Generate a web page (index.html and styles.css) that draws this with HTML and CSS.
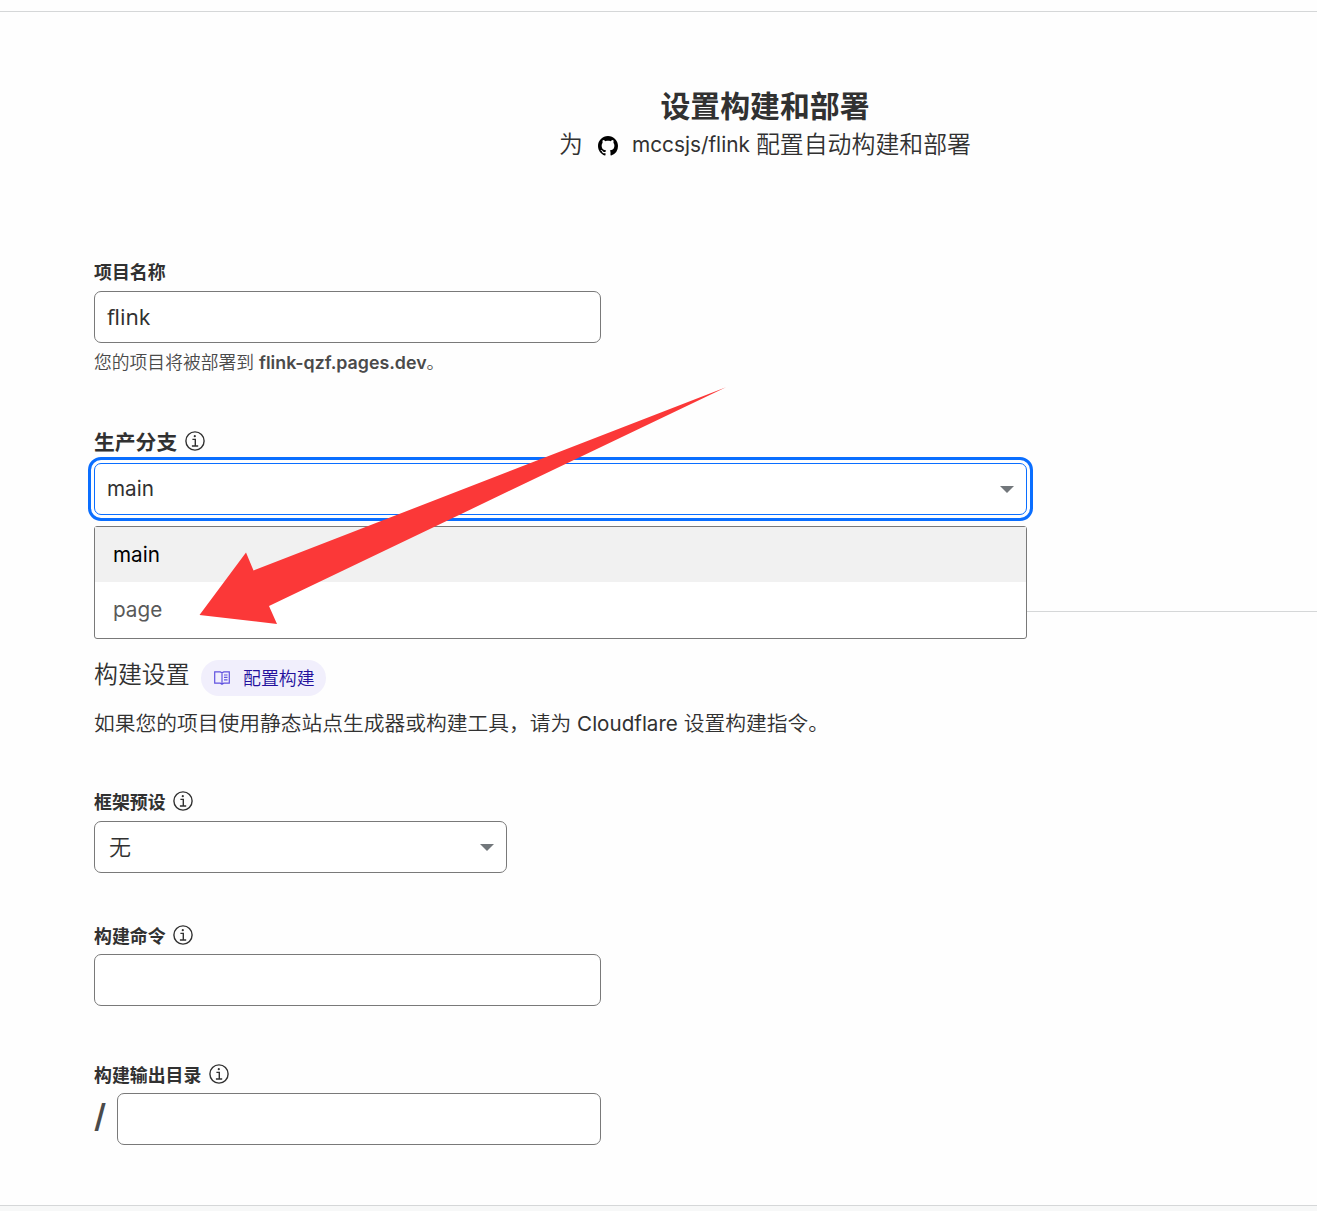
FILE: index.html
```html
<!DOCTYPE html>
<html lang="zh-CN">
<head>
<meta charset="utf-8">
<title>设置构建和部署</title>
<link rel="stylesheet" href="styles.css">
</head>
<body>
<svg class="sprite" aria-hidden="true">
  <symbol id="info" viewBox="0 0 20 20">
    <circle cx="10" cy="10" r="9.1" fill="none" stroke="currentColor" stroke-width="1.4"/>
    <circle cx="9.8" cy="5.2" r="1.1" fill="currentColor"/>
    <path d="M7.400 8.400h2.900v6.500M6.900 15h6.300" fill="none" stroke="currentColor" stroke-width="1.4"/>
  </symbol>
</svg>
<div class="topbar"></div>
<main class="page">
  <header class="heading">
    <h1>设置构建和部署</h1>
    <p class="subtitle"><span class="cjk">为</span>
      <svg class="github" viewBox="0 0 16 16"><path d="M8 0C3.58 0 0 3.58 0 8c0 3.54 2.29 6.53 5.47 7.59.4.07.55-.17.55-.38 0-.19-.01-.82-.01-1.49-2.01.37-2.53-.49-2.69-.94-.09-.23-.48-.94-.82-1.13-.28-.15-.68-.52-.01-.53.63-.01 1.08.58 1.23.82.72 1.21 1.87.87 2.33.66.07-.52.28-.87.51-1.07-1.78-.2-3.64-.89-3.64-3.95 0-.87.31-1.59.82-2.15-.08-.2-.36-1.02.08-2.12 0 0 .67-.21 2.2.82.64-.18 1.32-.27 2-.27s1.36.09 2 .27c1.53-1.04 2.2-.82 2.2-.82.44 1.1.16 1.92.08 2.12.51.56.82 1.27.82 2.15 0 3.07-1.87 3.75-3.65 3.95.29.25.54.73.54 1.48 0 1.07-.01 1.93-.01 2.2 0 .21.15.46.55.38A8.01 8.01 0 0 0 16 8c0-4.42-3.58-8-8-8z"/></svg>
      <span class="repo">mccsjs/flink</span><span class="cjk">配置自动构建和部署</span></p>
  </header>

  <section class="field project">
    <label class="label">项目名称</label>
    <div class="control project-name">flink</div>
    <p class="hint">您的项目将被部署到 <b>flink-qzf.pages.dev</b>。</p>
  </section>

  <section class="field branch">
    <label class="label large">生产分支<svg class="info"><use href="#info"/></svg></label>
    <div class="control select focused"><span>main</span><i class="caret"></i></div>
    <div class="menu">
      <div class="option active">main</div>
      <div class="option">page</div>
    </div>
  </section>

  <section class="build">
    <div class="build-title"><h2>构建设置</h2>
      <a class="pill"><svg class="book" viewBox="0 0 16 14" fill="none" stroke="currentColor" stroke-width="1.2"><path d="M8 1.6V13M.7.9h5.6L8 1.8 9.7.9h5.600v11.300H9.700L8 13.200l-1.700-1H.7z"/><path d="M10 4h3.500M10 6.400h3.500M10 8.800h3.500"/></svg><span>配置构建</span></a>
    </div>
    <p class="description">如果您的项目使用静态站点生成器或构建工具，请为 <span class="brand">Cloudflare</span> 设置构建指令。</p>
  </section>

  <section class="field preset">
    <label class="label">框架预设<svg class="info"><use href="#info"/></svg></label>
    <div class="control select"><span>无</span><i class="caret"></i></div>
  </section>

  <section class="field command">
    <label class="label">构建命令<svg class="info"><use href="#info"/></svg></label>
    <div class="control"></div>
  </section>

  <section class="field output">
    <label class="label">构建输出目录<svg class="info"><use href="#info"/></svg></label>
    <div class="path"><span class="slash">/</span><div class="control"></div></div>
  </section>
</main>
<footer class="footer"></footer>
<svg class="arrow" viewBox="0 0 528 240"><path d="M.5 228 47 165.500l7.500 18L527 .2 70 219l8 18z"/></svg>
</body>
</html>
```
FILE: styles.css
```css
* { box-sizing: border-box; }
body {
  position: relative;
  margin: 0;
  height: 1211px;
  overflow: hidden;
  display: flex;
  flex-direction: column;
  background: #fefefe;
  color: #313131;
  font-family: Inter, "Noto Sans CJK SC", sans-serif;
  font-size: 20.700px;
}
h1, h2, p { margin: 0; }
.sprite { display: none; }
.topbar { flex: none; height: 12px; border-bottom: 1px solid #d5d7d8; }
.page { height: 1193px; flex: none; }
.heading {
  height: 246px;
  padding: 75px 0 0 213px;
  display: flex;
  flex-direction: column;
  align-items: center;
}
h1 { font-size: 29.900px; line-height: 38px; font-weight: 700; }
.subtitle {
  display: flex;
  align-items: center;
  height: 38px;
  font-size: 23.900px;
  font-weight: 350;
  white-space: nowrap;
}
.cjk { padding-bottom: 4px; }
.github { width: 20px; height: 20px; margin: 4px 14px 0 15px; fill: #000; }
.repo { width: 124px; font-size: 20.800px; font-weight: 400; }
.field { padding-left: 94px; }
.label {
  display: flex;
  align-items: center;
  height: 26px;
  font-size: 17.900px;
  font-weight: 700;
}
.label.large { height: 25px; font-size: 20.800px; }
.info { width: 20px; height: 20px; margin-left: 7.400px; }
.control {
  width: 507px;
  height: 52px;
  padding: 0 12px;
  display: flex;
  align-items: center;
  border: 1px solid #797979;
  border-radius: 7px;
  background: #fff;
}
.project { height: 168px; }
.project .control { margin-top: 7px; }
.project-name { padding-bottom: 2px; font-family: "Noto Sans", sans-serif; font-size: 21.500px; }
.hint { margin-top: 6px; font-size: 17.800px; line-height: 28px; font-weight: 350; color: #4a4a4a; }
.hint b { font-weight: 600; }
.branch { height: 186px; position: relative; padding-top: 2px; }
.branch::after {
  content: "";
  display: block;
  height: 1px;
  margin-top: 96px;
  background: #d5d7d8;
}
.select { justify-content: space-between; }
.branch .control { width: 933px; margin-top: 10px; padding-bottom: 1px; }
.focused { border-color: #0a6eff; outline: 3px solid #0a6eff; outline-offset: 3px; }
.branch .info { margin-left: 8px; }
.branch .caret { margin-top: 2px; }
.caret {
  border: 7px solid transparent;
  border-top-color: #72777b;
  border-bottom: 0;
}
.menu {
  position: absolute;
  left: 94px;
  top: 100px;
  width: 933px;
  height: 113px;
  border: 1px solid #797979;
  border-radius: 3px;
  background: #fff;
}
.option { height: 55px; padding-left: 18px; line-height: 55px; color: #595959; }
.option.active { background: #f1f1f1; color: #000; }
.build { height: 176px; padding: 46px 0 0 94px; }
.build-title { display: flex; height: 38px; }
h2 { width: 107px; font-size: 23.900px; line-height: 33px; font-weight: 350; }
.pill {
  display: flex;
  align-items: center;
  width: 125px;
  height: 36px;
  margin-top: 2px;
  padding-left: 13px;
  border-radius: 18px;
  background: #f1effc;
  color: #24109c;
  font-size: 17.900px;
  font-weight: 350;
}
.pill span { padding-bottom: 2px; }
.book { width: 16px; height: 14px; margin-right: 13px; color: #6052df; }
.description { margin-top: 13px; font-size: 20.750px; line-height: 30px; font-weight: 350; white-space: nowrap; }
.brand { font-size: 20.600px; font-weight: 400; }
.preset { height: 134px; }
.preset .control { width: 413px; margin-top: 7px; padding-left: 14px; padding-bottom: 5px; font-size: 22px; font-weight: 350; }
.preset .caret { margin-top: 5px; }
.command { height: 139px; }
.command .control { margin-top: 6px; }
.path { display: flex; margin-top: 6px; }
.path .control { width: 484px; }
.slash { width: 23px; font-size: 32px; line-height: 46px; font-weight: 600; color: #4a4a4a; }
.footer { flex: 1; border-top: 1px solid #d5d7d8; background: #f7f8f8; }
.arrow { position: absolute; left: 199px; top: 387px; width: 528px; height: 240px; fill: #fb3838; }
```
